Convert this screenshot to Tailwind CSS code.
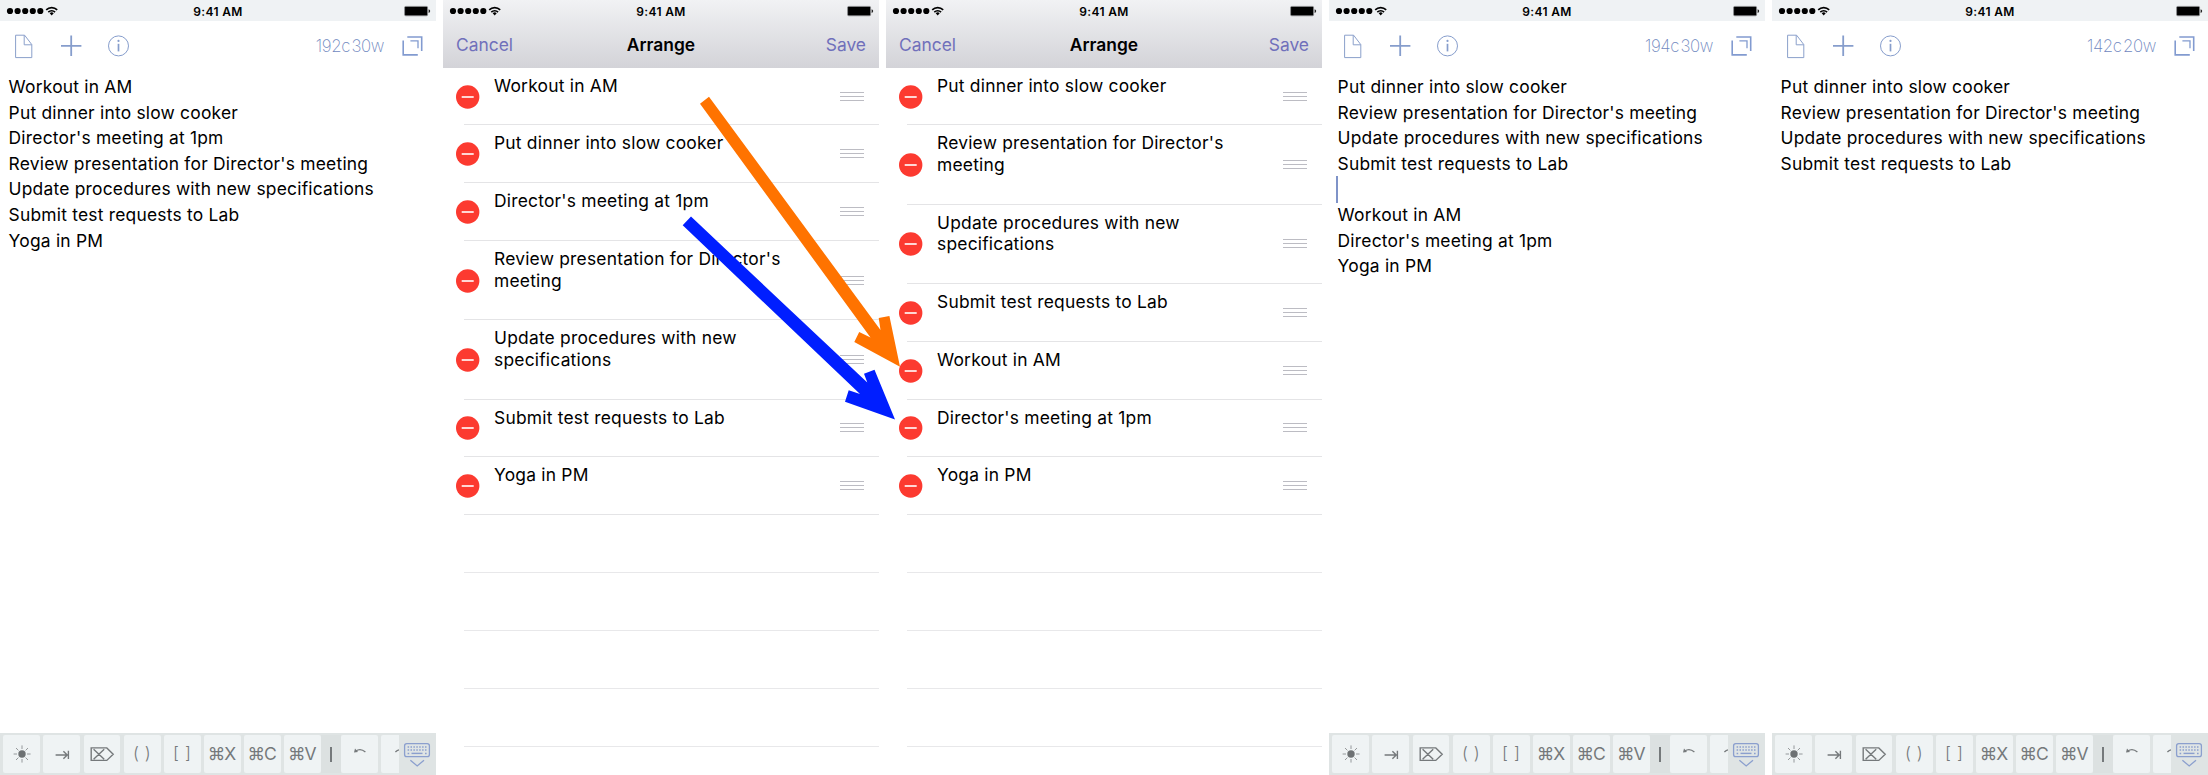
<!DOCTYPE html>
<html lang="en">
<head>
<meta charset="utf-8">
<title>Arrange lines</title>
<script src="https://cdn.jsdelivr.net/npm/@tailwindcss/browser@4"></script>
</head>
<body class="bg-white">
<main id="app" class="relative flex h-[775px] w-[2208px] gap-[7px] overflow-hidden bg-white font-['Inter','Liberation_Sans',sans-serif] text-black"></main>

<script>
const status = `
  <div class="flex h-[21px] shrink-0 items-center">
    <svg class="h-[21px] w-[70px]" viewBox="0 0 70 21">
      <g fill="#000"><circle cx="10" cy="11" r="3.1"/><circle cx="17.6" cy="11" r="3.1"/><circle cx="25.2" cy="11" r="3.1"/><circle cx="32.8" cy="11" r="3.1"/><circle cx="40.3" cy="11" r="3.1"/></g>
      <g fill="none" stroke="#000" stroke-width="1.6"><path d="M46.2 9.9a7.8 7.8 0 0 1 11 0"/><path d="M48.3 12.1a4.8 4.8 0 0 1 6.8 0"/></g>
      <path d="M51.7 15.4l-2-2.1a2.8 2.8 0 0 1 4 0z" fill="#000"/>
    </svg>
    <div class="flex-1 pt-[2px] text-center text-[12px] leading-[19px] font-semibold tracking-[0.35px]">9:41 AM</div>
    <svg class="h-[21px] w-[70px]" viewBox="366 0 70 21">
      <rect x="404.6" y="6.4" width="23" height="9.4" rx="1.2" fill="#000" stroke="#8b8d8f" stroke-width=".8"/>
      <path d="M428.6 9.2q1.6.5 1.6 1.9t-1.6 1.9z" fill="#222"/>
    </svg>
  </div>`;

const keyClass = "flex h-[38px] w-[36.8px] shrink-0 items-center justify-center rounded-[2px] bg-[#eff3f4]";
const key = (t, c) => `<div class="${keyClass} ${c}">${t}</div>`;
const keyboardBar = `
  <div class="flex h-[42px] shrink-0 items-start bg-[#dfe4e4] pt-[2px] text-[#75797b]">
    <div class="flex w-[398.5px] gap-[3.35px] overflow-hidden pl-[3.3px]">
      ${key(`<svg class="h-[20px] w-[20px]" viewBox="0 0 20 20"><circle cx="10" cy="10" r="3.7" fill="#6d7173"/><g stroke="#8b8f91" stroke-width=".9"><path d="M10 1.4v3.6M10 15v3.6M1.6 10H5M15 10h3.6M4 4l2.4 2.4M13.6 13.6L16 16M16 4l-2.4 2.4M6.4 13.6L4 16"/></g></svg>`, "")}
      ${key(`<svg class="h-[20px] w-[20px]" viewBox="0 0 20 20" fill="none" stroke="#75797b" stroke-width="1.4"><path d="M3.6 11h11.2M11.4 7.2L15.2 11l-3.8 3.8M16.4 6.8v8.2"/></svg>`, "")}
      ${key(`<svg class="h-[20px] w-[26px]" viewBox="0 0 26 20" fill="none" stroke="#75797b" stroke-width="1.4"><path d="M2.2 3.9h15.6l6.4 6.3-6.4 6.2H2.2zM4.6 5.2l10.6 10M15.2 5.2L4.6 15.2"/></svg>`, "")}
      ${key("( )", "text-[17px] font-light tracking-[0.6px]")}
      ${key("[ ]", "text-[17px] font-light tracking-[0.6px]")}
      ${key("⌘X", "pr-[2px] text-[17.5px] tracking-[-1px]")}
      ${key("⌘C", "pr-[2px] text-[17.5px] tracking-[-1px]")}
      ${key("⌘V", "pr-[2px] text-[17.5px] tracking-[-1px]")}
      <div class="-mr-[3.35px] -ml-[3.35px] flex h-[38px] w-[20.2px] shrink-0 items-center justify-center bg-[#dce1e1]"><div class="h-[15px] w-[1.4px] bg-[#75797b]"></div></div>
      ${key(`<svg class="h-[20px] w-[20px]" viewBox="0 0 20 20"><path d="M5.6 7.2Q10.4 3.6 15.4 8" fill="none" stroke="#75797b" stroke-width="1.3"/><path d="M4 8.6l1-4 3 3.4z" fill="#75797b"/></svg>`, "")}
      ${key(`<svg class="h-[20px] w-[20px]" viewBox="0 0 20 20"><path d="M5.4 8Q9.4 4 14.4 7.2" fill="none" stroke="#75797b" stroke-width="1.3"/></svg>`, "")}
    </div>
    <svg class="h-[38px] w-[37px]" viewBox="399 735 37 38" fill="none" stroke="#8b9fce">
      <rect x="404.6" y="743.6" width="24.8" height="13" rx="2.2" stroke-width="1.3"/>
      <path d="M407.6 746.9h19M407.6 750.1h19" stroke-width="1.5" stroke-dasharray="1.5 1.4"/>
      <path d="M407.6 753.4h1.6M425 753.4h1.6" stroke-width="1.5"/><path d="M411.5 753.4h11" stroke-width="1.4"/>
      <path d="M410.4 760.2l6.8 5.8 6.8-5.8" stroke-width="1.3"/>
    </svg>
  </div>`;

const editor = (count, lines) => `
  <section class="flex w-[436px] shrink-0 flex-col">
    <div class="bg-[#eff2f4]">${status}</div>
    <div class="flex h-[47px] shrink-0 items-start justify-between">
      <svg class="h-[47px] w-[140px]" viewBox="0 21 140 47" fill="none" stroke="#869dcc">
        <path d="M15.6 35.2h9l7.2 9.4v13H15.6zM24.2 35.2v9.6h7.6" stroke-width="1" stroke="#8ba0cb"/>
        <path d="M71.2 35.5v20.4M61 45.8h20.4" stroke-width="1.8"/>
        <circle cx="118.5" cy="45.9" r="10" stroke-width="1"/>
        <path d="M118.5 43.8v7.6" stroke-width="1.7"/><circle cx="118.5" cy="40.9" r="1.1" fill="#869dcc" stroke="none"/>
      </svg>
      <div class="flex">
        <div class="pt-[13px] text-[16.8px] leading-[24px] font-extralight tracking-[-0.4px] whitespace-nowrap text-[#7088c0]">${count[0]}<span class="ml-[1.5px]">${count[1]}</span></div>
        <svg class="h-[47px] w-[52px]" viewBox="384 21 52 47" fill="none" stroke="#829bd0">
          <path d="M403.2 40.4v14.5h14.6" stroke-width="1.6"/>
          <path d="M407.3 37h14.4v14" stroke-width="1.6"/>
          <path d="M410.4 40.8h7.6v7.4" stroke-width="1.3"/>
        </svg>
      </div>
    </div>
    <div class="flex-1 pt-[6px] pl-[8.6px] text-[17.4px] leading-[25.6px] tracking-[0.22px] whitespace-nowrap">
      ${lines.map(l => l ? `<div>${l}</div>` : `<div class="h-[25.6px]"><div class="-ml-[1.3px] h-[27px] w-[2px] bg-[#7f93c8]"></div></div>`).join("")}
    </div>
    ${keyboardBar}
  </section>`;

const row = t => `
  <li class="flex ${t.includes("<br>") ? "h-[79.15px]" : "h-[57.9px]"} shrink-0">
    <div class="flex w-[21px] items-center pl-[12.6px]">
      <svg class="h-[24px] w-[24px] shrink-0" viewBox="0 0 24 24"><circle cx="11.7" cy="12" r="11.7" fill="#fc3a30"/><path d="M5.7 12h12" stroke="#fff" stroke-width="1.6"/></svg>
    </div>
    <div class="flex flex-1 justify-between border-b border-[#e4e4e6] pl-[30px]">
      <p class="pt-[7px] text-[17.4px] leading-[21.4px] tracking-[0.22px] whitespace-nowrap">${t}</p>
      <div class="mr-[15.5px] flex w-[23.5px] flex-col justify-center gap-[3px]"><i class="h-px bg-[#bcbcc3]"></i><i class="h-px bg-[#bcbcc3]"></i><i class="h-px bg-[#bcbcc3]"></i></div>
    </div>
  </li>`;

const arrange = items => `
  <section class="flex w-[436px] shrink-0 flex-col">
    <header class="flex h-[67.6px] shrink-0 flex-col bg-linear-to-b from-[#f1f2f4] to-[#d3d3d8]">
      ${status}
      <div class="grid grid-cols-3 px-[13px] pt-[11px] text-[17.4px] leading-[26px] text-[#7070bb]">
        <span>Cancel</span><span class="text-center font-semibold text-black">Arrange</span><span class="text-right">Save</span>
      </div>
    </header>
    <ul class="flex flex-col">
      ${items.map(row).join("")}
      ${[1, 2, 3, 4].map(() => `<li class="ml-[21px] h-[57.9px] border-b border-[#e8e8ea]"></li>`).join("")}
    </ul>
  </section>`;

const W = "Workout in AM", P = "Put dinner into slow cooker", D = "Director's meeting at 1pm",
  R = "Review presentation for Director's meeting", U = "Update procedures with new specifications",
  S = "Submit test requests to Lab", Y = "Yoga in PM",
  R2 = "Review presentation for Director's<br>meeting", U2 = "Update procedures with new<br>specifications";

document.getElementById("app").innerHTML =
  editor(["192c", "30w"], [W, P, D, R, U, S, Y]) +
  arrange([W, P, D, R2, U2, S, Y]) +
  arrange([P, R2, U2, S, W, D, Y]) +
  editor(["194c", "30w"], [P, R, U, S, "", W, D, Y]) +
  editor(["142c", "20w"], [P, R, U, S]) +
  `<svg class="pointer-events-none absolute top-0 left-0 h-[775px] w-[2208px]" viewBox="0 0 2208 775">
    <path fill="#ff7300" d="M709 96.7L880.5 330 878.7 318 889.4 316 900 366.8 854.3 342 859.2 332 870.5 337.5 700 103.7z"/>
    <path fill="#001eff" d="M691 216.6L867.3 382.6 864 373.7 874.5 369.8 895 419.4 845 401.7 848.7 390.3 860 394 682.7 225.3z"/>
  </svg>`;
</script>
</body>
</html>
